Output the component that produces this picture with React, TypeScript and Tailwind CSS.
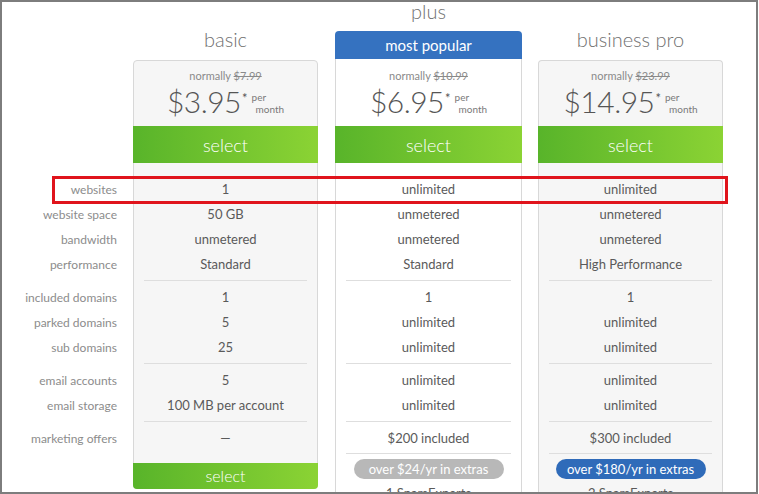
type Row = { label: string; values: [string, string, string] };

const GROUPS: Row[][] = [
  [
    { label: "websites", values: ["1", "unlimited", "unlimited"] },
    { label: "website space", values: ["50 GB", "unmetered", "unmetered"] },
    { label: "bandwidth", values: ["unmetered", "unmetered", "unmetered"] },
    { label: "performance", values: ["Standard", "Standard", "High Performance"] },
  ],
  [
    { label: "included domains", values: ["1", "1", "1"] },
    { label: "parked domains", values: ["5", "unlimited", "unlimited"] },
    { label: "sub domains", values: ["25", "unlimited", "unlimited"] },
  ],
  [
    { label: "email accounts", values: ["5", "unlimited", "unlimited"] },
    { label: "email storage", values: ["100 MB per account", "unlimited", "unlimited"] },
  ],
  [{ label: "marketing offers", values: ["—", "$200 included", "$300 included"] }],
];

const GREEN = "bg-gradient-to-r from-[#58b42a] to-[#8bd334]";

function Price({ was, now }: { was: string; now: string }) {
  return (
    <div className="flex flex-col items-center">
      <div className="text-[11px] leading-[14px] text-[#8a8a8a]">
        normally <span className="line-through">{was}</span>
      </div>
      <div className="flex items-start">
        <span className="text-[30px] leading-[36px] font-light tracking-[-0.5px] text-[#555]">{now}</span>
        <span className="mt-[9px] ml-[1px] text-[13px] leading-[13px] text-[#555]">*</span>
        <span className="mt-[8px] ml-[4px] text-[10px] leading-[12px] text-[#7a7a7a]">
          per
          <br />
          <span className="ml-[4px]">month</span>
        </span>
      </div>
    </div>
  );
}

function Divider() {
  return (
    <div className="px-[10px] pt-[3px] pb-[4px]">
      <div className="h-px bg-[#dedede]" />
    </div>
  );
}

function ValueRows({ col }: { col: 0 | 1 | 2 }) {
  return (
    <div className="pt-[14px]">
      {GROUPS.map((g, gi) => (
        <div key={gi}>
          {gi > 0 ? <Divider /> : null}
          {g.map((r) => (
            <div key={r.label} className="h-[25px] text-center text-[13px] leading-[25px] text-[#5a5a5a]">
              {r.values[col]}
            </div>
          ))}
        </div>
      ))}
    </div>
  );
}

function Extras({ text, pill, spam }: { text: string; pill: string; spam: string }) {
  return (
    <>
      <div className="px-[10px] pt-[2px] pb-[5px]">
        <div className="h-px bg-[#dedede]" />
      </div>
      <div className="flex justify-center">
        <div className={`h-[20px] w-[150px] rounded-full text-center text-[13px] leading-[20px] text-white ${pill}`}>
          {text}
        </div>
      </div>
      <div className="mt-[6px] text-center text-[13px] leading-[16px] text-[#5a5a5a]">{spam}</div>
    </>
  );
}

export default function App() {
  return (
    <div
      className="relative h-[494px] w-[758px] overflow-hidden border-2 border-[#7d7d7d] bg-white"
      style={{ fontFamily: "Lato, 'Open Sans', sans-serif" }}
    >
      <div className="flex">
        {/* labels */}
        <div className="w-[115px] pt-[175px]">
          {GROUPS.map((g, gi) => (
            <div key={gi} className={gi > 0 ? "pt-[8px]" : ""}>
              {g.map((r) => (
                <div key={r.label} className="h-[25px] text-right text-[12px] leading-[25px] text-[#8c8c8c]">
                  {r.label}
                </div>
              ))}
            </div>
          ))}
        </div>

        {/* basic */}
        <div className="ml-[16px] w-[185px]">
          <div className="flex h-[58px] items-end justify-center pb-[9px] text-[20px] leading-[24px] font-light text-[#707070]">
            basic
          </div>
          <div className="rounded-[4px] border border-[#d8d8d8] bg-[#f6f6f6]">
            <div className="h-[65px] pt-[8px]">
              <Price was="$7.99" now="$3.95" />
            </div>
            <div className={`-mx-px h-[37px] text-center text-[18px] leading-[39px] font-light text-white ${GREEN}`}>
              select
            </div>
            <ValueRows col={0} />
            <div className={`-mx-px -mb-px mt-[12px] h-[26px] rounded-b-[4px] text-center text-[16px] leading-[26px] font-light text-white ${GREEN}`}>
              select
            </div>
          </div>
        </div>

        {/* plus */}
        <div className="ml-[17px] w-[187px]">
          <div className="flex h-[29px] items-end justify-center pb-[8px] text-[20px] leading-[24px] font-light text-[#707070]">
            plus
          </div>
          <div className="h-[28px] rounded-t-[4px] bg-[#3572c0] text-center text-[15px] leading-[28px] text-white">
            most popular
          </div>
          <div className="h-[460px] border-x border-[#d8d8d8] bg-white">
            <div className="h-[67px] pt-[10px]">
              <Price was="$10.99" now="$6.95" />
            </div>
            <div className={`-mx-px h-[37px] text-center text-[18px] leading-[39px] font-light text-white ${GREEN}`}>
              select
            </div>
            <ValueRows col={1} />
            <Extras text="over $24/yr in extras" pill="bg-[#b8b8b8]" spam="1 SpamExperts" />
          </div>
        </div>

        {/* business pro */}
        <div className="ml-[16px] w-[185px]">
          <div className="flex h-[58px] items-end justify-center pb-[9px] text-[20px] leading-[24px] font-light text-[#707070]">
            business pro
          </div>
          <div className="h-[460px] rounded-t-[4px] border-x border-t border-[#d8d8d8] bg-[#f6f6f6]">
            <div className="h-[65px] pt-[8px]">
              <Price was="$23.99" now="$14.95" />
            </div>
            <div className={`-mx-px h-[37px] text-center text-[18px] leading-[39px] font-light text-white ${GREEN}`}>
              select
            </div>
            <ValueRows col={2} />
            <Extras text="over $180/yr in extras" pill="bg-[#2f6bb9]" spam="2 SpamExperts" />
          </div>
        </div>
      </div>

      {/* highlight annotation */}
      <div className="pointer-events-none absolute left-[50px] top-[174px] h-[28px] w-[676px] border-[3px] border-[#e0141c]" />
    </div>
  );
}
